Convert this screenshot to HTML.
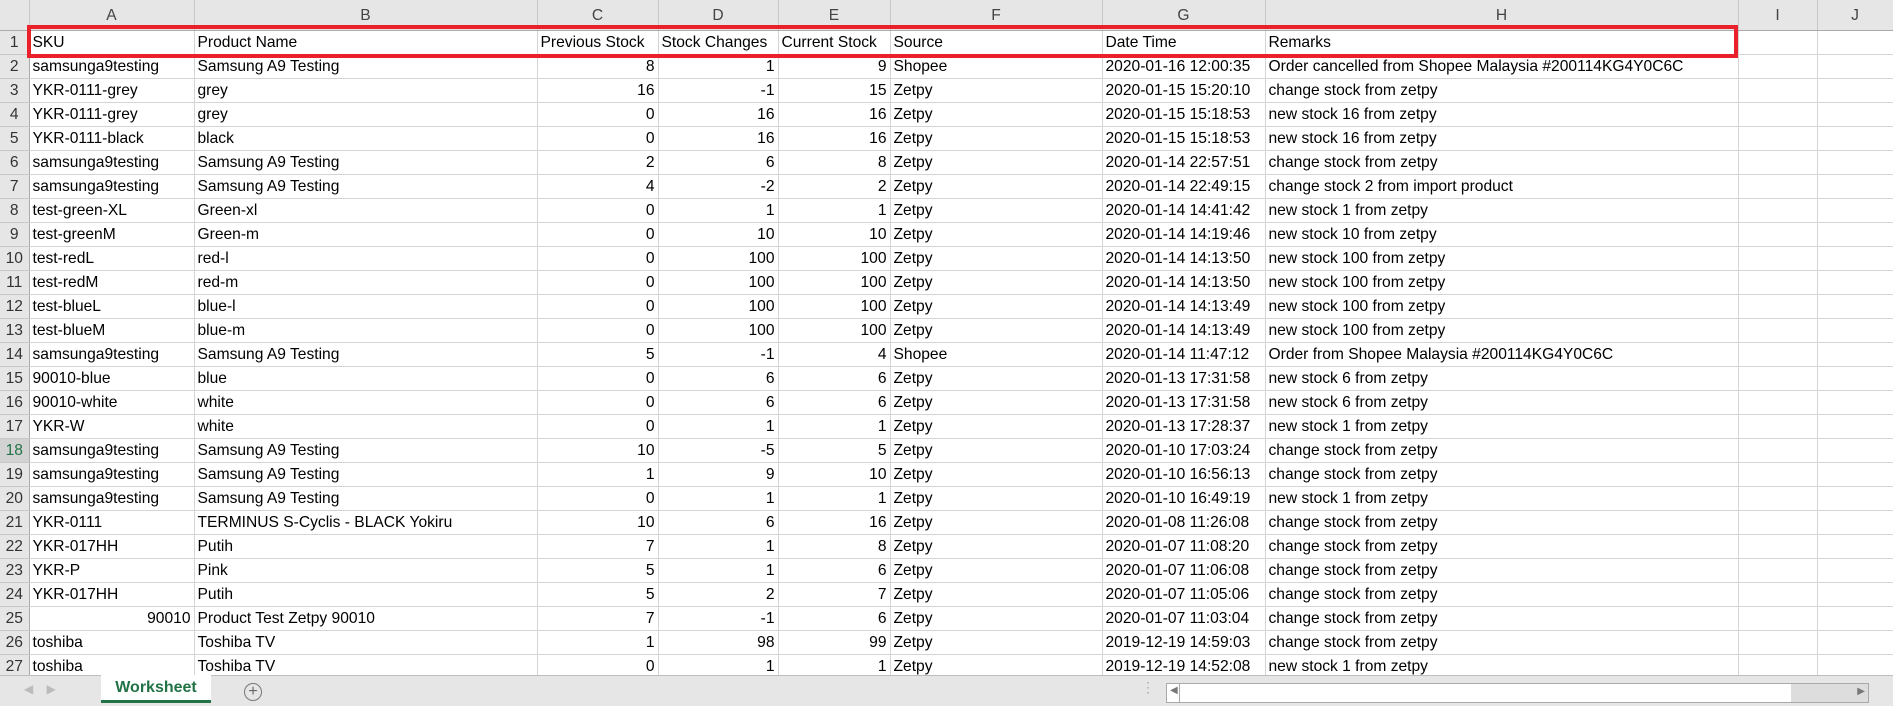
<!DOCTYPE html>
<html><head><meta charset="utf-8"><style>
*{margin:0;padding:0;box-sizing:border-box}
body{width:1893px;height:706px;overflow:hidden;background:#fff;font-family:"Liberation Sans",sans-serif;font-size:15.6px;color:#000;position:relative}
table{position:absolute;left:0;top:0;border-collapse:collapse;table-layout:fixed;width:1893px}
td{height:24px;border-right:1px solid #d4d4d4;border-bottom:1px solid #d4d4d4;padding:0 3px;white-space:nowrap;overflow:hidden;line-height:23px;vertical-align:bottom}
td.n{text-align:right}
tr.h td{height:30px;background:#e6e6e6;text-align:center;color:#444;border-right:1px solid #c8c8c8;border-bottom:1px solid #ababab;line-height:28px}
td.r{background:#e6e6e6;text-align:center;color:#333;border-right:1px solid #ababab;border-bottom:1px solid #c8c8c8;padding:0}
td.rs{color:#217346;background:#d2d2d2}
#red{position:absolute;left:27px;top:25px;width:1711px;height:33px;border:4px solid #e8212a}
#tabs{position:absolute;left:0;top:675px;width:1893px;height:31px;background:#e6e6e6;border-top:1px solid #bdbdbd}
#tab{position:absolute;left:101px;top:-1px;width:110px;height:28px;background:#fff;border-bottom:3px solid #217346;color:#217346;font-weight:bold;font-size:16px;text-align:center;line-height:26px}
#plus{position:absolute;left:244px;top:7px;width:18px;height:18px;border:1px solid #777;border-radius:50%;color:#666;font-size:16px;line-height:15px;text-align:center}
#sb{position:absolute;left:1166px;top:7px;width:703px;height:20px;background:#fff;border:1px solid #aaa}
#sbr{position:absolute;left:1791px;top:7px;width:78px;height:20px;background:#ddd;border:1px solid #aaa;border-left:none}
</style></head><body>
<table>
<colgroup><col style="width:29px"><col style="width:165px"><col style="width:343px"><col style="width:121px"><col style="width:120px"><col style="width:112px"><col style="width:212px"><col style="width:163px"><col style="width:473px"><col style="width:79px"><col style="width:76px"></colgroup>
<tr class="h"><td style="background:#e6e6e6"></td><td>A</td><td>B</td><td>C</td><td>D</td><td>E</td><td>F</td><td>G</td><td>H</td><td>I</td><td>J</td></tr>
<tr><td class="r">1</td><td>SKU</td><td>Product Name</td><td>Previous Stock</td><td>Stock Changes</td><td>Current Stock</td><td>Source</td><td>Date Time</td><td>Remarks</td><td></td><td></td></tr>
<tr><td class="r">2</td><td>samsunga9testing</td><td>Samsung A9 Testing</td><td class="n">8</td><td class="n">1</td><td class="n">9</td><td>Shopee</td><td>2020-01-16 12:00:35</td><td>Order cancelled from Shopee Malaysia #200114KG4Y0C6C</td><td></td><td></td></tr>
<tr><td class="r">3</td><td>YKR-0111-grey</td><td>grey</td><td class="n">16</td><td class="n">-1</td><td class="n">15</td><td>Zetpy</td><td>2020-01-15 15:20:10</td><td>change stock from zetpy</td><td></td><td></td></tr>
<tr><td class="r">4</td><td>YKR-0111-grey</td><td>grey</td><td class="n">0</td><td class="n">16</td><td class="n">16</td><td>Zetpy</td><td>2020-01-15 15:18:53</td><td>new stock 16 from zetpy</td><td></td><td></td></tr>
<tr><td class="r">5</td><td>YKR-0111-black</td><td>black</td><td class="n">0</td><td class="n">16</td><td class="n">16</td><td>Zetpy</td><td>2020-01-15 15:18:53</td><td>new stock 16 from zetpy</td><td></td><td></td></tr>
<tr><td class="r">6</td><td>samsunga9testing</td><td>Samsung A9 Testing</td><td class="n">2</td><td class="n">6</td><td class="n">8</td><td>Zetpy</td><td>2020-01-14 22:57:51</td><td>change stock from zetpy</td><td></td><td></td></tr>
<tr><td class="r">7</td><td>samsunga9testing</td><td>Samsung A9 Testing</td><td class="n">4</td><td class="n">-2</td><td class="n">2</td><td>Zetpy</td><td>2020-01-14 22:49:15</td><td>change stock 2 from import product</td><td></td><td></td></tr>
<tr><td class="r">8</td><td>test-green-XL</td><td>Green-xl</td><td class="n">0</td><td class="n">1</td><td class="n">1</td><td>Zetpy</td><td>2020-01-14 14:41:42</td><td>new stock 1 from zetpy</td><td></td><td></td></tr>
<tr><td class="r">9</td><td>test-greenM</td><td>Green-m</td><td class="n">0</td><td class="n">10</td><td class="n">10</td><td>Zetpy</td><td>2020-01-14 14:19:46</td><td>new stock 10 from zetpy</td><td></td><td></td></tr>
<tr><td class="r">10</td><td>test-redL</td><td>red-l</td><td class="n">0</td><td class="n">100</td><td class="n">100</td><td>Zetpy</td><td>2020-01-14 14:13:50</td><td>new stock 100 from zetpy</td><td></td><td></td></tr>
<tr><td class="r">11</td><td>test-redM</td><td>red-m</td><td class="n">0</td><td class="n">100</td><td class="n">100</td><td>Zetpy</td><td>2020-01-14 14:13:50</td><td>new stock 100 from zetpy</td><td></td><td></td></tr>
<tr><td class="r">12</td><td>test-blueL</td><td>blue-l</td><td class="n">0</td><td class="n">100</td><td class="n">100</td><td>Zetpy</td><td>2020-01-14 14:13:49</td><td>new stock 100 from zetpy</td><td></td><td></td></tr>
<tr><td class="r">13</td><td>test-blueM</td><td>blue-m</td><td class="n">0</td><td class="n">100</td><td class="n">100</td><td>Zetpy</td><td>2020-01-14 14:13:49</td><td>new stock 100 from zetpy</td><td></td><td></td></tr>
<tr><td class="r">14</td><td>samsunga9testing</td><td>Samsung A9 Testing</td><td class="n">5</td><td class="n">-1</td><td class="n">4</td><td>Shopee</td><td>2020-01-14 11:47:12</td><td>Order from Shopee Malaysia #200114KG4Y0C6C</td><td></td><td></td></tr>
<tr><td class="r">15</td><td>90010-blue</td><td>blue</td><td class="n">0</td><td class="n">6</td><td class="n">6</td><td>Zetpy</td><td>2020-01-13 17:31:58</td><td>new stock 6 from zetpy</td><td></td><td></td></tr>
<tr><td class="r">16</td><td>90010-white</td><td>white</td><td class="n">0</td><td class="n">6</td><td class="n">6</td><td>Zetpy</td><td>2020-01-13 17:31:58</td><td>new stock 6 from zetpy</td><td></td><td></td></tr>
<tr><td class="r">17</td><td>YKR-W</td><td>white</td><td class="n">0</td><td class="n">1</td><td class="n">1</td><td>Zetpy</td><td>2020-01-13 17:28:37</td><td>new stock 1 from zetpy</td><td></td><td></td></tr>
<tr><td class="r rs">18</td><td>samsunga9testing</td><td>Samsung A9 Testing</td><td class="n">10</td><td class="n">-5</td><td class="n">5</td><td>Zetpy</td><td>2020-01-10 17:03:24</td><td>change stock from zetpy</td><td></td><td></td></tr>
<tr><td class="r">19</td><td>samsunga9testing</td><td>Samsung A9 Testing</td><td class="n">1</td><td class="n">9</td><td class="n">10</td><td>Zetpy</td><td>2020-01-10 16:56:13</td><td>change stock from zetpy</td><td></td><td></td></tr>
<tr><td class="r">20</td><td>samsunga9testing</td><td>Samsung A9 Testing</td><td class="n">0</td><td class="n">1</td><td class="n">1</td><td>Zetpy</td><td>2020-01-10 16:49:19</td><td>new stock 1 from zetpy</td><td></td><td></td></tr>
<tr><td class="r">21</td><td>YKR-0111</td><td>TERMINUS S-Cyclis - BLACK Yokiru</td><td class="n">10</td><td class="n">6</td><td class="n">16</td><td>Zetpy</td><td>2020-01-08 11:26:08</td><td>change stock from zetpy</td><td></td><td></td></tr>
<tr><td class="r">22</td><td>YKR-017HH</td><td>Putih</td><td class="n">7</td><td class="n">1</td><td class="n">8</td><td>Zetpy</td><td>2020-01-07 11:08:20</td><td>change stock from zetpy</td><td></td><td></td></tr>
<tr><td class="r">23</td><td>YKR-P</td><td>Pink</td><td class="n">5</td><td class="n">1</td><td class="n">6</td><td>Zetpy</td><td>2020-01-07 11:06:08</td><td>change stock from zetpy</td><td></td><td></td></tr>
<tr><td class="r">24</td><td>YKR-017HH</td><td>Putih</td><td class="n">5</td><td class="n">2</td><td class="n">7</td><td>Zetpy</td><td>2020-01-07 11:05:06</td><td>change stock from zetpy</td><td></td><td></td></tr>
<tr><td class="r">25</td><td class="n">90010</td><td>Product Test Zetpy 90010</td><td class="n">7</td><td class="n">-1</td><td class="n">6</td><td>Zetpy</td><td>2020-01-07 11:03:04</td><td>change stock from zetpy</td><td></td><td></td></tr>
<tr><td class="r">26</td><td>toshiba</td><td>Toshiba TV</td><td class="n">1</td><td class="n">98</td><td class="n">99</td><td>Zetpy</td><td>2019-12-19 14:59:03</td><td>change stock from zetpy</td><td></td><td></td></tr>
<tr><td class="r">27</td><td>toshiba</td><td>Toshiba TV</td><td class="n">0</td><td class="n">1</td><td class="n">1</td><td>Zetpy</td><td>2019-12-19 14:52:08</td><td>new stock 1 from zetpy</td><td></td><td></td></tr>
</table>
<div id="red"></div>
<div id="tabs">
<div style="position:absolute;left:24px;top:6px;color:#bbb;font-size:12px">&#9664;&nbsp;&nbsp;&nbsp;&nbsp;&#9654;</div>
<div id="tab">Worksheet</div>
<div id="plus">+</div>
<div style="position:absolute;left:1141px;top:8px;color:#aaa;font-size:14px;line-height:6px">&#8942;</div>
<div id="sb"><span style="position:absolute;left:3px;top:1px;color:#777;font-size:10px">&#9664;</span><div style="position:absolute;left:12px;top:-1px;height:20px;border-left:1px solid #aaa"></div></div>
<div id="sbr"><span style="position:absolute;right:3px;top:2px;color:#777;font-size:10px">&#9654;</span></div>
</div>
</body></html>
